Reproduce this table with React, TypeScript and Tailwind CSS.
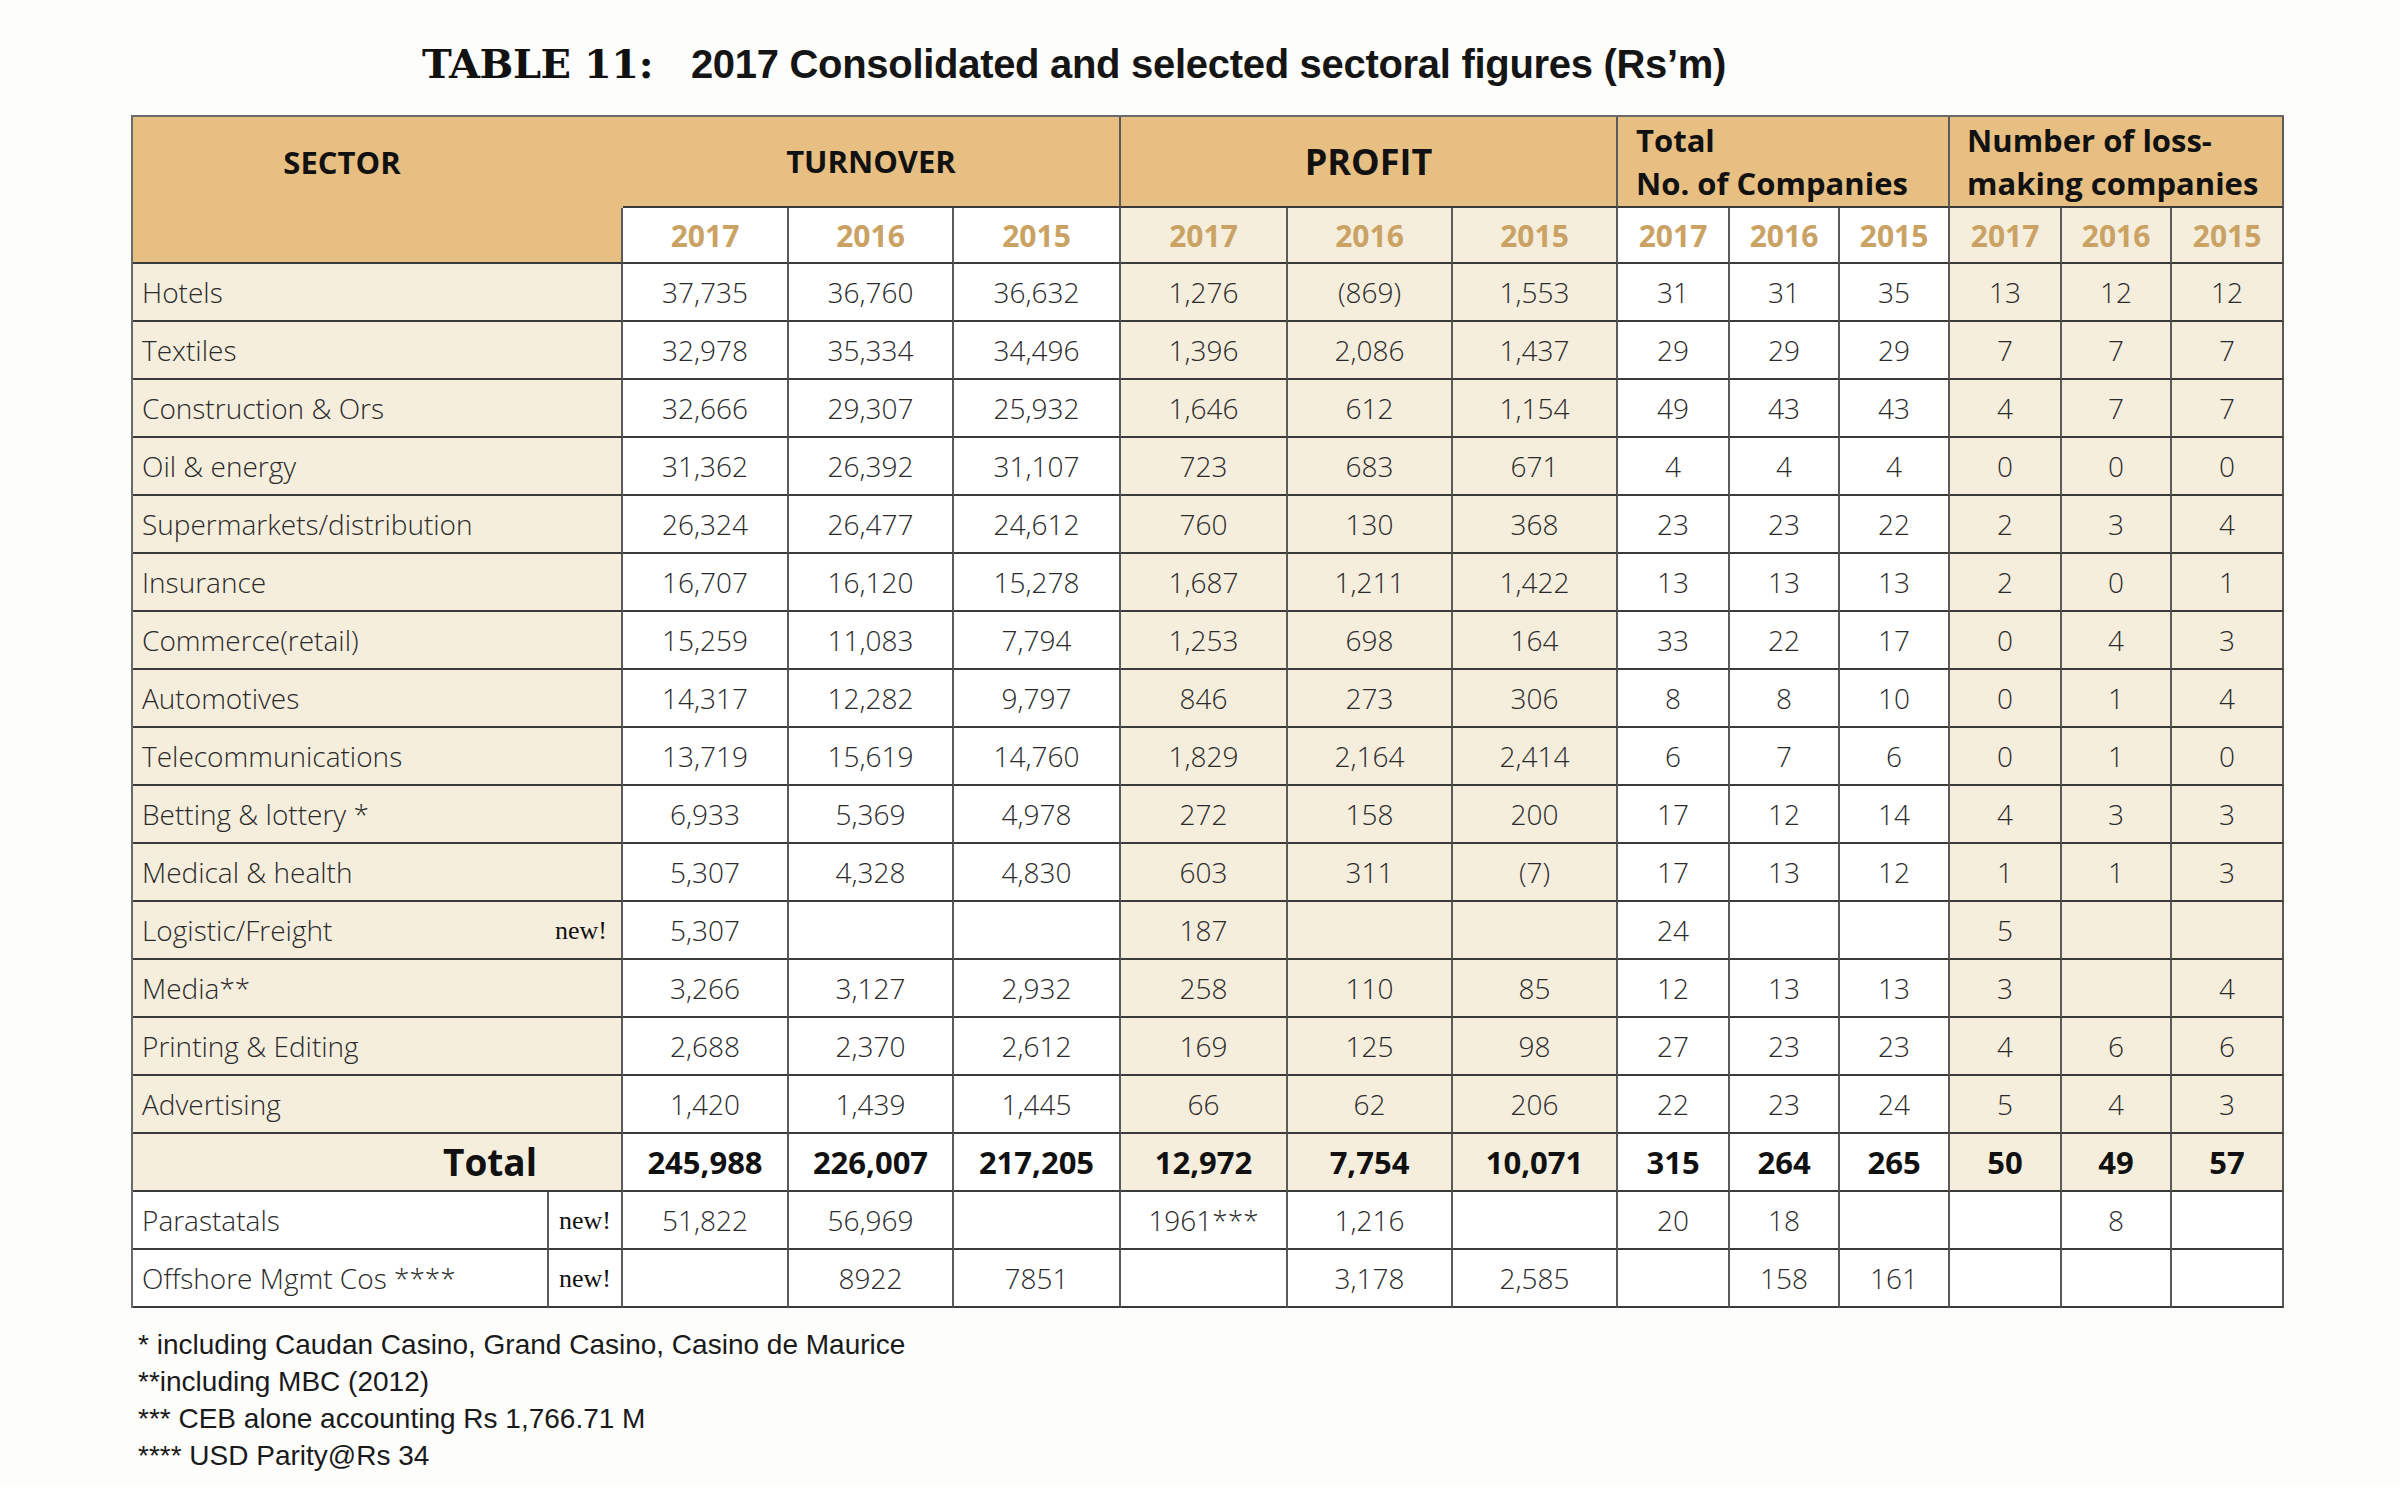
import React from "react";

const rows: string[][] = [
  ["Hotels", "37,735", "36,760", "36,632", "1,276", "(869)", "1,553", "31", "31", "35", "13", "12", "12"],
  ["Textiles", "32,978", "35,334", "34,496", "1,396", "2,086", "1,437", "29", "29", "29", "7", "7", "7"],
  ["Construction & Ors", "32,666", "29,307", "25,932", "1,646", "612", "1,154", "49", "43", "43", "4", "7", "7"],
  ["Oil & energy", "31,362", "26,392", "31,107", "723", "683", "671", "4", "4", "4", "0", "0", "0"],
  ["Supermarkets/distribution", "26,324", "26,477", "24,612", "760", "130", "368", "23", "23", "22", "2", "3", "4"],
  ["Insurance", "16,707", "16,120", "15,278", "1,687", "1,211", "1,422", "13", "13", "13", "2", "0", "1"],
  ["Commerce(retail)", "15,259", "11,083", "7,794", "1,253", "698", "164", "33", "22", "17", "0", "4", "3"],
  ["Automotives", "14,317", "12,282", "9,797", "846", "273", "306", "8", "8", "10", "0", "1", "4"],
  ["Telecommunications", "13,719", "15,619", "14,760", "1,829", "2,164", "2,414", "6", "7", "6", "0", "1", "0"],
  ["Betting & lottery *", "6,933", "5,369", "4,978", "272", "158", "200", "17", "12", "14", "4", "3", "3"],
  ["Medical & health", "5,307", "4,328", "4,830", "603", "311", "(7)", "17", "13", "12", "1", "1", "3"],
  ["Logistic/Freight", "5,307", "", "", "187", "", "", "24", "", "", "5", "", ""],
  ["Media**", "3,266", "3,127", "2,932", "258", "110", "85", "12", "13", "13", "3", "", "4"],
  ["Printing & Editing", "2,688", "2,370", "2,612", "169", "125", "98", "27", "23", "23", "4", "6", "6"],
  ["Advertising", "1,420", "1,439", "1,445", "66", "62", "206", "22", "23", "24", "5", "4", "3"],
];

const total = ["245,988", "226,007", "217,205", "12,972", "7,754", "10,071", "315", "264", "265", "50", "49", "57"];

const extra: { name: string; vals: string[] }[] = [
  { name: "Parastatals", vals: ["51,822", "56,969", "", "1961***", "1,216", "", "20", "18", "", "", "8", ""] },
  { name: "Offshore Mgmt Cos ****", vals: ["", "8922", "7851", "", "3,178", "2,585", "", "158", "161", "", "", ""] },
];

const colWidths = [416, 74, 166, 165, 167, 167, 165, 165, 112, 110, 110, 112, 110, 112];

const isCream = (i: number) => (i >= 3 && i <= 5) || i >= 9;

const cellBase = "border-r-2 border-b-2 border-r-[#5a5a5a] border-b-[#3a3a3a] p-0";

export default function App() {
  const years = ["2017", "2016", "2015"];
  return (
    <div
      className="min-h-[1487px] w-[2400px] bg-[#fdfdfc]"
      style={{ fontFamily: '"Open Sans", "Noto Sans", sans-serif' }}
    >
      <div className="flex h-[115px] items-center pl-[422px] pt-[12px]">
        <span
          className="text-[40px] font-black leading-none tracking-[-0.5px] text-[#111]"
          style={{ fontFamily: '"DejaVu Serif", "Liberation Serif", serif' }}
        >
          TABLE 11:
        </span>
        <span
          className="ml-[38px] text-[40px] font-bold leading-none tracking-[-0.3px] text-[#151515]"
          style={{ fontFamily: '"Liberation Sans", Arial, sans-serif' }}
        >
          2017 Consolidated and selected sectoral figures (Rs’m)
        </span>
      </div>

      <div className="pl-[131px]">
        <table className="w-[2151px] table-fixed border-separate border-spacing-0 border-l-2 border-t-2 border-l-[#6a6a6a] border-t-[#6a6a6a]">
          <colgroup>
            {colWidths.map((w, i) => (
              <col key={i} style={{ width: w }} />
            ))}
          </colgroup>
          <thead>
            <tr className="h-[91px] bg-[#e7bf82]">
              <th colSpan={2} className="p-0 pr-[72px] text-center align-middle text-[31px] font-bold text-[#111]">
                SECTOR
              </th>
              <th colSpan={3} className={`${cellBase} text-center align-middle text-[31px] font-bold text-[#111]`}>
                TURNOVER
              </th>
              <th colSpan={3} className={`${cellBase} text-center align-middle text-[36px] font-bold text-[#111]`}>
                PROFIT
              </th>
              <th colSpan={3} className={`${cellBase} pl-[18px] text-left align-middle text-[31px] font-bold leading-[43px] text-[#111]`}>
                Total
                <br />
                No. of Companies
              </th>
              <th colSpan={3} className={`${cellBase} pl-[17px] text-left align-middle text-[31px] font-bold leading-[43px] text-[#111]`}>
                Number of loss-
                <br />
                making companies
              </th>
            </tr>
            <tr className="h-[56px]">
              <th colSpan={2} className={`${cellBase} bg-[#e7bf82]`}></th>
              {[0, 1, 2, 3].flatMap((g) =>
                years.map((y, k) => {
                  const idx = g * 3 + k;
                  return (
                    <th
                      key={`${g}-${k}`}
                      className={`${cellBase} ${isCream(idx) ? "bg-[#f6eedd]" : "bg-white"} text-center align-middle text-[30px] font-bold text-[#c9a264]`}
                    >
                      {y}
                    </th>
                  );
                })
              )}
            </tr>
          </thead>
          <tbody className="text-[28px] font-light text-[#2a2a2a]">
            {rows.map((r, ri) => (
              <tr key={ri} className="h-[58px]">
                <td colSpan={2} className={`${cellBase} bg-[#f6eedd] pl-[9px] pr-[14px] align-middle`}>
                  <div className="flex items-center justify-between whitespace-nowrap">
                    <span>{r[0]}</span>
                    {r[0] === "Logistic/Freight" && (
                      <span
                        className="text-[26px] font-normal text-[#111]"
                        style={{ fontFamily: '"Liberation Serif", "Times New Roman", serif' }}
                      >
                        new!
                      </span>
                    )}
                  </div>
                </td>
                {r.slice(1).map((v, i) => (
                  <td
                    key={i}
                    className={`${cellBase} ${isCream(i) ? "bg-[#f6eedd]" : "bg-white"} text-center align-middle`}
                  >
                    {v}
                  </td>
                ))}
              </tr>
            ))}
            <tr className="h-[58px]">
              <td colSpan={2} className={`${cellBase} bg-[#f6eedd] pr-[84px] text-right align-middle text-[37px] font-bold text-[#111]`}>
                Total
              </td>
              {total.map((v, i) => (
                <td
                  key={i}
                  className={`${cellBase} ${isCream(i) ? "bg-[#f6eedd]" : "bg-white"} text-center align-middle text-[31px] font-bold text-[#111]`}
                >
                  {v}
                </td>
              ))}
            </tr>
            {extra.map((e, ei) => (
              <tr key={ei} className="h-[58px] bg-white">
                <td className={`${cellBase} whitespace-nowrap pl-[9px] align-middle`}>{e.name}</td>
                <td
                  className={`${cellBase} text-center align-middle text-[26px] font-normal text-[#111]`}
                  style={{ fontFamily: '"Liberation Serif", "Times New Roman", serif' }}
                >
                  new!
                </td>
                {e.vals.map((v, i) => (
                  <td key={i} className={`${cellBase} text-center align-middle`}>
                    {v}
                  </td>
                ))}
              </tr>
            ))}
          </tbody>
        </table>

        <div
          className="mt-[18px] pl-[7px] text-[28px] leading-[37px] text-[#1a1a1a]"
          style={{ fontFamily: '"Liberation Sans", Arial, sans-serif' }}
        >
          <div>* including Caudan Casino, Grand Casino, Casino de Maurice</div>
          <div>**including MBC (2012)</div>
          <div>*** CEB alone accounting Rs 1,766.71 M</div>
          <div>**** USD Parity@Rs 34</div>
        </div>
      </div>
    </div>
  );
}
